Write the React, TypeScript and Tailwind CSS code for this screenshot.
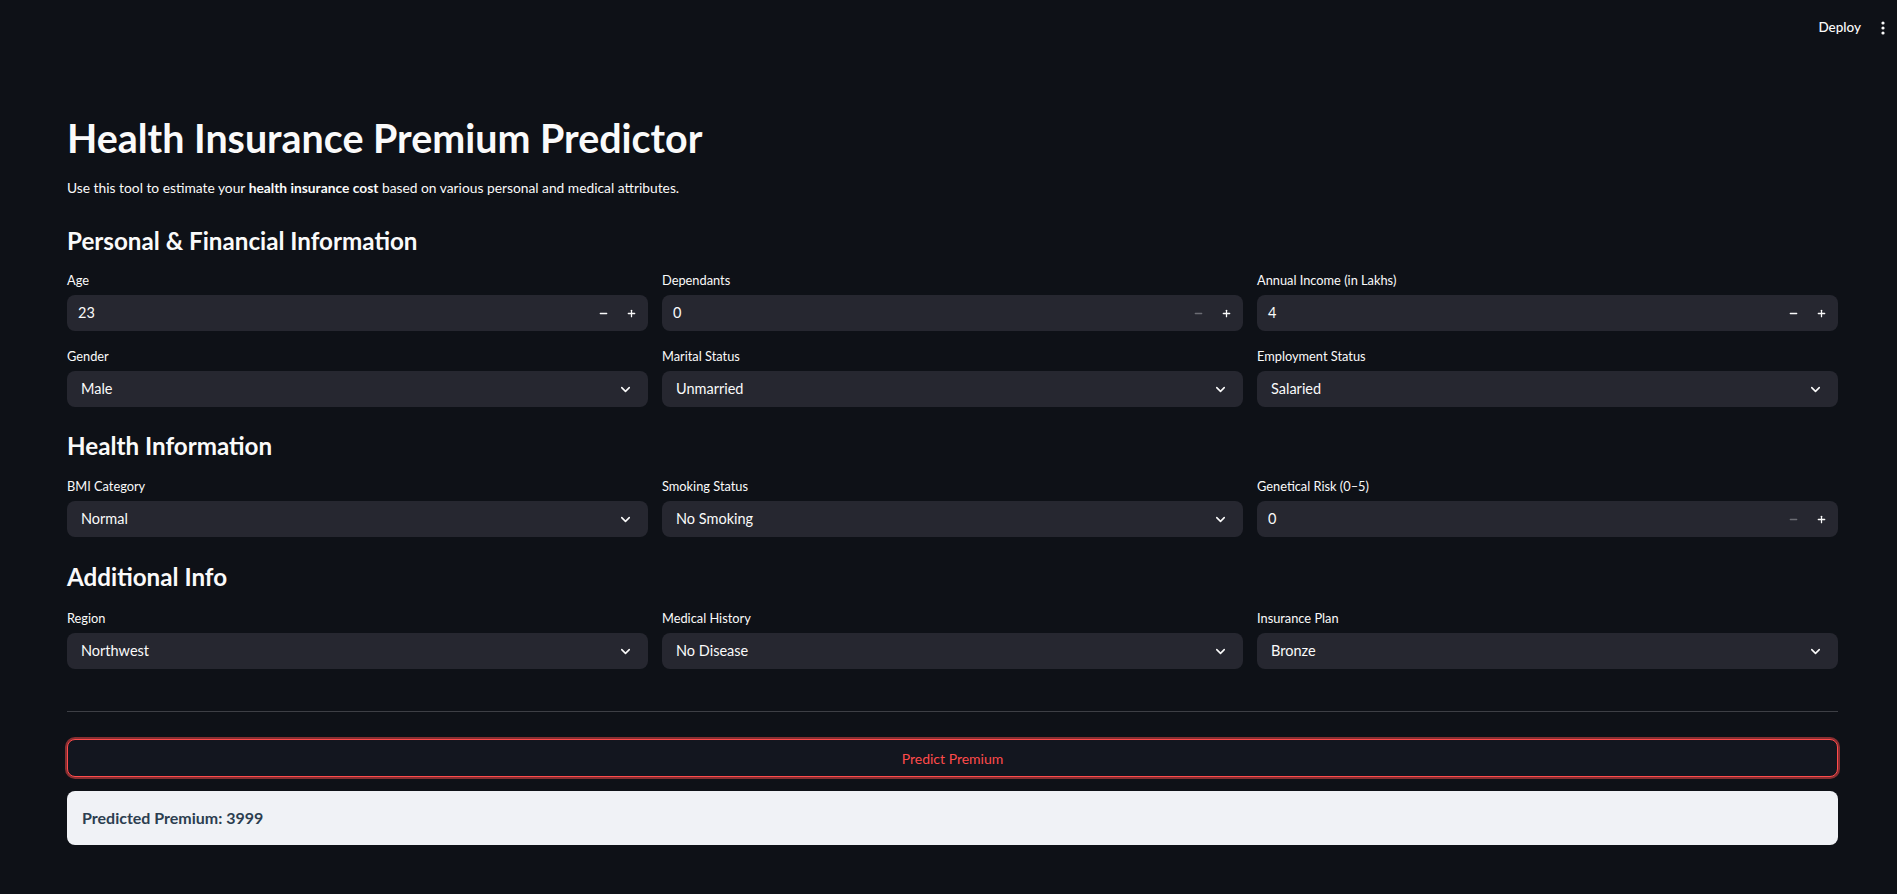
import { ChevronDown, Minus, Plus } from "lucide-react";

const FONT = { fontFamily: "Lato, 'Noto Sans', sans-serif" };

type NumberFieldProps = {
  label: string;
  value: string;
  minDisabled?: boolean;
};

type SelectFieldProps = {
  label: string;
  value: string;
};

function FieldLabel({ text }: { text: string }) {
  return (
    <div className="mb-[5px] flex h-5 items-center text-[12.8px] leading-5 text-[#fafafa]">
      {text}
    </div>
  );
}

function NumberField({ label, value, minDisabled }: NumberFieldProps) {
  return (
    <div className="min-w-0">
      <FieldLabel text={label} />
      <div className="flex h-9 items-center rounded-lg bg-[#262730] pl-[11px] pr-[3px]">
        <span className="flex-1 text-[14.5px] text-[#fafafa]">{value}</span>
        <button
          className={
            "flex h-9 w-7 items-center justify-center " +
            (minDisabled ? "text-[#6b6c73]" : "text-[#fafafa]")
          }
        >
          <Minus size={11} strokeWidth={2.75} />
        </button>
        <button className="flex h-9 w-7 items-center justify-center text-[#fafafa]">
          <Plus size={11} strokeWidth={2.75} />
        </button>
      </div>
    </div>
  );
}

function SelectField({ label, value }: SelectFieldProps) {
  return (
    <div className="min-w-0">
      <FieldLabel text={label} />
      <div className="flex h-9 items-center rounded-lg bg-[#262730] pl-[14px] pr-[15px]">
        <span className="flex-1 text-[14.5px] text-[#fafafa]">{value}</span>
        <ChevronDown size={15} strokeWidth={2.5} className="text-[#fafafa]" />
      </div>
    </div>
  );
}

function SectionHeading({ text, className }: { text: string; className: string }) {
  return (
    <h3 className={"h-8 text-[24.2px] font-bold leading-8 text-[#fafafa] " + className}>
      {text}
    </h3>
  );
}

export default function App() {
  return (
    <div className="min-h-[894px] w-full bg-[#0e1117]" style={FONT}>
      {/* Top bar */}
      <header className="flex h-[60px] items-center justify-end pb-[5px] pr-[12px]">
        <span className="mr-[20px] text-[13.5px] font-medium text-[#fafafa]">Deploy</span>
        <svg width="4" height="14" viewBox="0 0 4 14" className="text-[#fafafa]">
          <circle cx="2" cy="2" r="1.6" fill="currentColor" />
          <circle cx="2" cy="7" r="1.6" fill="currentColor" />
          <circle cx="2" cy="12" r="1.6" fill="currentColor" />
        </svg>
      </header>

      <main className="flex flex-col pb-[48px] pl-[67px] pr-[59px]">
        <h1 className="mt-[52px] h-[52px] text-[39.4px] font-bold leading-[52px] text-[#fafafa]">
          Health Insurance Premium Predictor
        </h1>
        <p className="mt-[12px] h-6 text-[13.8px] leading-6 text-[#fafafa]">
          Use this tool to estimate your <strong className="font-bold">health insurance cost</strong>{" "}
          based on various personal and medical attributes.
        </p>

        <SectionHeading text="Personal & Financial Information" className="mt-[25px]" />
        <div className="mt-[13px] grid grid-cols-3 gap-x-[14px] gap-y-[15px]">
          <NumberField label="Age" value="23" />
          <NumberField label="Dependants" value="0" minDisabled />
          <NumberField label="Annual Income (in Lakhs)" value="4" />
          <SelectField label="Gender" value="Male" />
          <SelectField label="Marital Status" value="Unmarried" />
          <SelectField label="Employment Status" value="Salaried" />
        </div>

        <SectionHeading text="Health Information" className="mt-[23px]" />
        <div className="mt-[14px] grid grid-cols-3 gap-x-[14px]">
          <SelectField label="BMI Category" value="Normal" />
          <SelectField label="Smoking Status" value="No Smoking" />
          <NumberField label="Genetical Risk (0–5)" value="0" minDisabled />
        </div>

        <SectionHeading text="Additional Info" className="mt-[24px]" />
        <div className="mt-[15px] grid grid-cols-3 gap-x-[14px]">
          <SelectField label="Region" value="Northwest" />
          <SelectField label="Medical History" value="No Disease" />
          <SelectField label="Insurance Plan" value="Bronze" />
        </div>

        <div className="mt-[42px] h-px bg-[#3d3f45]" />

        <button className="mt-[27px] flex h-[38px] items-center justify-center rounded-lg border border-[#ff4b4b] bg-[#13161f] text-[14px] text-[#ff4b4b] ring-[2px] ring-[#ff4b4b]/50">
          Predict Premium
        </button>

        <div className="mt-[14px] flex h-[54px] items-center rounded-lg bg-[#f0f2f6] px-[15px]">
          <span className="text-[16px] font-bold text-[#2c3e50]">Predicted Premium: 3999</span>
        </div>
      </main>
    </div>
  );
}
